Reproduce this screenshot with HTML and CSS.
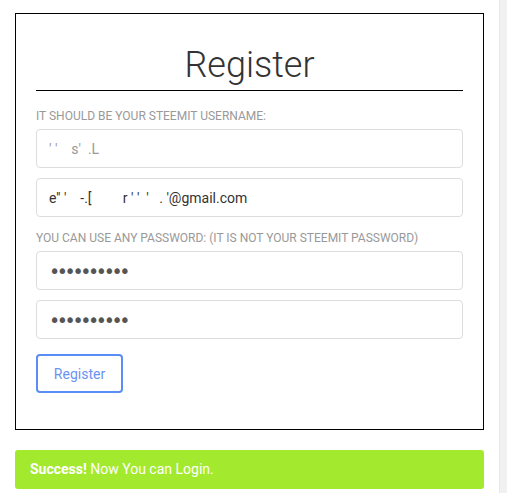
FILE: index.html
```html
<!DOCTYPE html>
<html>
<head>
  <meta charset="UTF-8">
  <title>Register</title>
  <link rel="stylesheet" href="styles.css">
</head>
<body>
  <div class="page">
    <div class="main">
      <form class="box" onsubmit="return false">
        <h1>Register</h1>
        <label>It should be your Steemit username:</label>
        <input class="field masked" type="text" value="' '    s'  .L">
        <input class="field" type="text" value="e'' '    -.[         r ' '  '   . '@gmail.com">
        <label>You can use any password: (It is not your Steemit password)</label>
        <input class="field" type="password" value="aaaaaaaaaa">
        <input class="field" type="password" value="aaaaaaaaaa">
        <button class="btn">Register</button>
      </form>
      <div class="alert"><b>Success!</b> Now You can Login.</div>
    </div>
    <div class="bar"></div>
  </div>
</body>
</html>
```

FILE: styles.css
```css
html, body {margin:0;height:100%;}
body {font-family:Roboto, "Liberation Sans", sans-serif;background:#fff;overflow:hidden;}
.page {display:flex;height:100%;}
.main {width:470px;padding:13px 15px 0;}
.bar {width:7px;background:#f1f1f1;border-left:1px solid #e8e8e8;}
.box {display:flex;flex-direction:column;border:1px solid #000;padding:16px 20px 36px;}
h1 {margin:0 0 14px;font-size:36px;font-weight:300;color:#333;text-align:center;line-height:44px;
  border-bottom:1px solid #000;padding:13px 0 3px;}
label {font-size:12px;color:#999;text-transform:uppercase;margin:4px 0 6px;line-height:14px;}
.field {height:39px;box-sizing:border-box;border:1px solid #ddd;border-radius:4px;padding:0 12px;
  font-family:inherit;font-size:14px;color:#333;margin-bottom:10px;outline:none;}
.masked {color:#999;}
.field[type=password] {color:#555;font-family:"DejaVu Sans", sans-serif;font-size:19px;letter-spacing:-3.4px;}
.btn {align-self:flex-start;margin-top:5px;width:87px;height:39px;background:#fff;border:2px solid #5b8ef5;
  border-radius:4px;color:#6b93f2;font-family:inherit;font-size:14px;cursor:pointer;}
.alert {margin-top:20px;background:#a3e92d;color:#fff;border-radius:3px;padding:11px 15px;font-size:14px;line-height:17px;}
```
